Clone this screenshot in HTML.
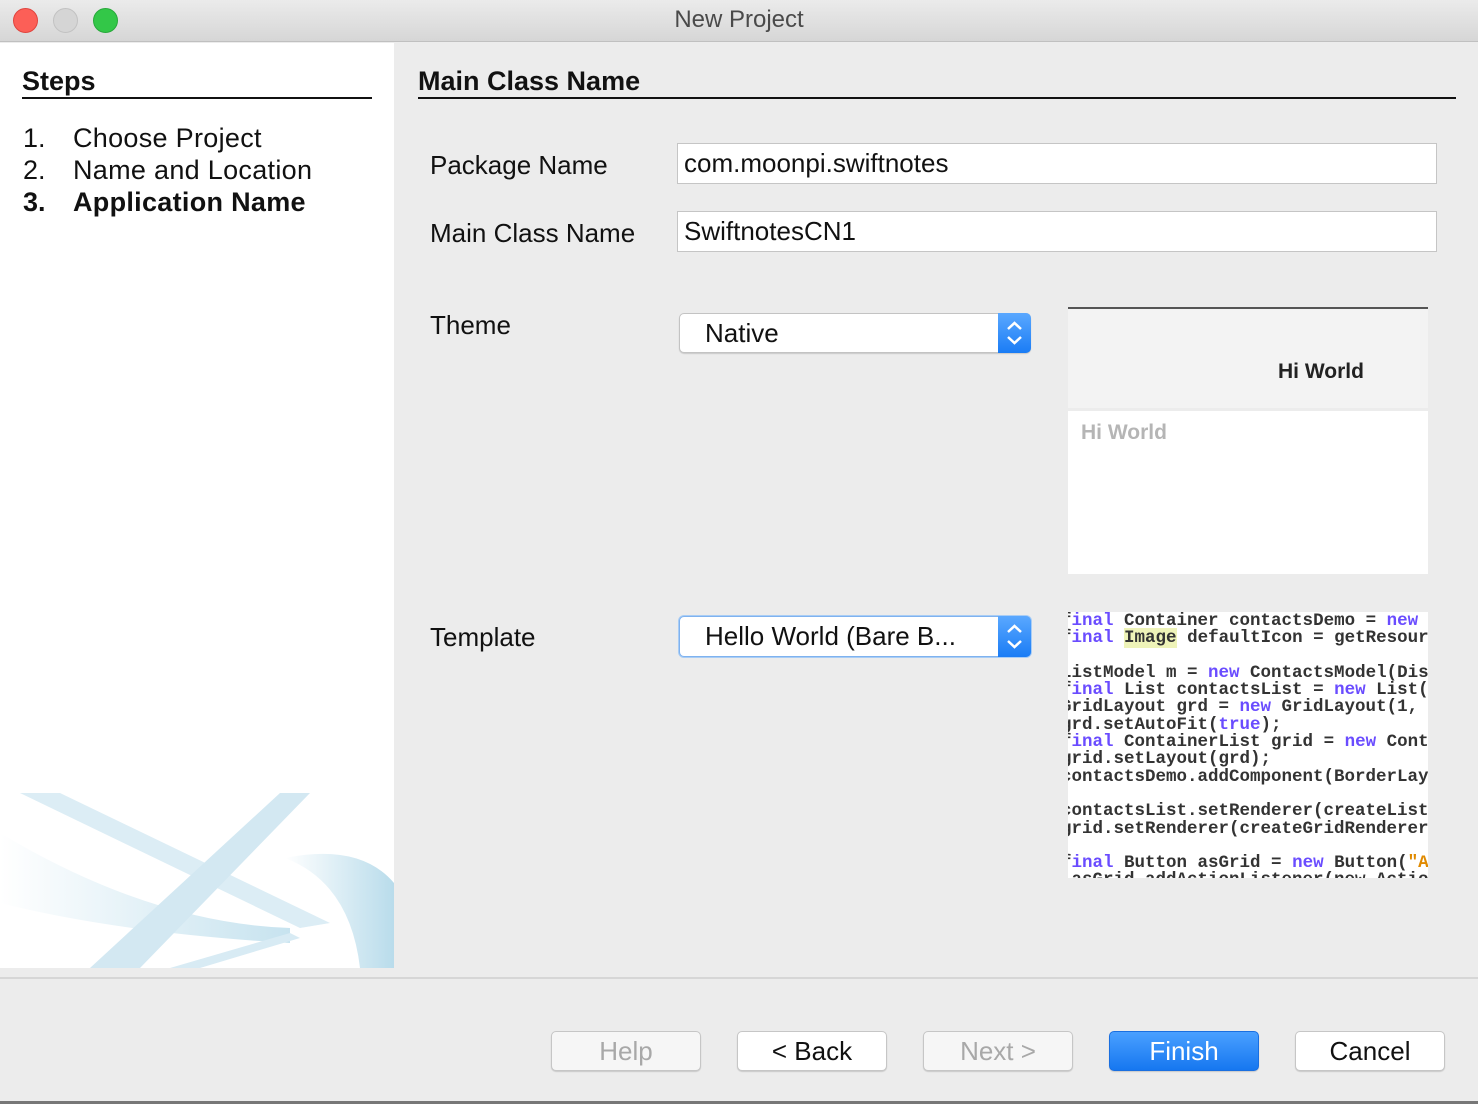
<!DOCTYPE html>
<html><head><meta charset="utf-8"><style>
*{margin:0;padding:0;box-sizing:border-box}
body{width:1478px;height:1104px;background:#ececec;font-family:"Liberation Sans",sans-serif;position:relative;overflow:hidden;color:#111}
.a{position:absolute}
.tb{left:0;top:0;width:1478px;height:42px;background:linear-gradient(#ebebeb,#d6d6d6);border-bottom:1px solid #c0c0c0}
.dot{width:25px;height:25px;border-radius:50%;top:8px}
.lbl{font-size:26px}
.field{background:#fff;border:1px solid #c5c5c5;font-size:26px;padding-left:6px;line-height:38px}
.combo{background:#fff;border:1px solid #c3c3c3;border-radius:5px;font-size:26px;padding-left:25px;box-shadow:0 1px 1px rgba(0,0,0,.15)}
.arr{right:-1px;top:-1px;width:33px;background:linear-gradient(#5aa8ff,#1a7cf5);border-radius:0 5px 5px 0}
.btn{top:1031px;width:150px;height:40px;background:#fff;border:1px solid #c6c6c6;border-radius:5px;font-size:26px;text-align:center;line-height:38px;box-shadow:0 1px 1px rgba(0,0,0,.15)}
.code{font-family:"Liberation Mono",monospace;font-size:17.5px;font-weight:bold;color:#333;line-height:17.3px;white-space:pre;letter-spacing:0}
.k{color:#6a4cff}
</style></head><body>
<div class="a tb"></div>
<div class="a dot" style="left:13px;background:#fc5f57;border:1px solid #e0443e"></div>
<div class="a dot" style="left:53px;background:#d5d5d5;border:1px solid #c2c2c2"></div>
<div class="a dot" style="left:93px;background:#33c748;border:1px solid #27a93a"></div>
<div class="a" style="left:0;width:1478px;top:6px;text-align:center;font-size:24px;color:#4a4a4a">New Project</div>

<div class="a" style="left:0;top:43px;width:394px;height:925px;background:#fff;overflow:hidden">
<svg width="394" height="925" style="position:absolute;left:0;top:0">
<defs><linearGradient id="g" x1="0" x2="1"><stop offset="0" stop-color="#fff"/><stop offset="1" stop-color="#b9dceb"/></linearGradient></defs>
<path d="M20 750 L60 750 L330 880 L300 885 Z" fill="#dcedf5"/>
<path d="M0 790 Q150 880 290 885 L290 900 Q120 890 0 860Z" fill="url(#g)" opacity=".8"/>
<path d="M310 750 L280 750 L90 925 L140 925Z" fill="#d3e8f2"/>
<path d="M285 815 Q360 800 394 840 L394 925 L360 925 Q350 840 285 815Z" fill="url(#g)"/>
<path d="M170 925 L290 890 L300 895 L200 925Z" fill="#d8ebf4"/>
</svg>
</div>
<div class="a" style="left:22px;top:66px;font-size:27px;font-weight:bold">Steps</div>
<div class="a" style="left:22px;top:97px;width:350px;height:2px;background:#111"></div>
<div class="a" style="left:23px;top:122px;font-size:27px;line-height:32px">1.<br>2.<br><b>3.</b></div>
<div class="a" style="left:73px;top:122px;font-size:27px;line-height:32px;letter-spacing:0.3px">Choose Project<br>Name and Location<br><b>Application Name</b></div>

<div class="a" style="left:418px;top:66px;font-size:27px;font-weight:bold">Main Class Name</div>
<div class="a" style="left:418px;top:97px;width:1038px;height:2px;background:#111"></div>

<div class="a lbl" style="left:430px;top:150px">Package Name</div>
<div class="a field" style="left:677px;top:143px;width:760px;height:41px">com.moonpi.swiftnotes</div>
<div class="a lbl" style="left:430px;top:218px">Main Class Name</div>
<div class="a field" style="left:677px;top:211px;width:760px;height:41px">SwiftnotesCN1</div>

<div class="a lbl" style="left:430px;top:310px">Theme</div>
<div class="a combo" style="left:679px;top:313px;width:352px;height:40px;line-height:38px">Native<div class="a arr" style="height:40px"><svg width="33" height="40"><path d="M10 16 L16.5 10 L23 16 M10 24 L16.5 30 L23 24" stroke="#fff" stroke-width="2.5" fill="none"/></svg></div></div>

<div class="a lbl" style="left:430px;top:622px">Template</div>
<div class="a combo" style="left:679px;top:616px;width:352px;height:41px;line-height:39px;border-color:#7fb2ef;box-shadow:0 0 0 1px #a9cdf5">Hello World (Bare B...<div class="a arr" style="height:41px"><svg width="33" height="41"><path d="M10 16 L16.5 10 L23 16 M10 25 L16.5 31 L23 25" stroke="#fff" stroke-width="2.5" fill="none"/></svg></div></div>

<div class="a" style="left:1068px;top:307px;width:360px;height:101px;background:#f3f3f3;border-top:2px solid #555"></div>
<div class="a" style="left:1278px;top:360px;font-size:21px;font-weight:bold;color:#222">Hi World</div>
<div class="a" style="left:1068px;top:411px;width:360px;height:163px;background:#fff"></div>
<div class="a" style="left:1081px;top:421px;font-size:21px;font-weight:bold;color:#b5b5b5">Hi World</div>

<div class="a" style="left:1068px;top:612px;width:360px;height:266px;background:#fff;overflow:hidden">
<div class="a code" style="left:-7px;top:1px">f<span class="k">inal</span> Container contactsDemo = <span class="k">new</span> Container
f<span class="k">inal</span> <span style="background:#eef3b8">Image</span> defaultIcon = getResourceAs

ListModel m = <span class="k">new</span> ContactsModel(Display
f<span class="k">inal</span> List contactsList = <span class="k">new</span> List(m);
GridLayout grd = <span class="k">new</span> GridLayout(1, 3);
grd.setAutoFit(<span class="k">true</span>);
f<span class="k">inal</span> ContainerList grid = <span class="k">new</span> Container
grid.setLayout(grd);
contactsDemo.addComponent(BorderLayout

contactsList.setRenderer(createListRen
grid.setRenderer(createGridRenderer());

f<span class="k">inal</span> Button asGrid = <span class="k">new</span> Button(<span style="color:#e08a00">"As Gr</span>
 asGrid.addActionListener(new Action</div>
</div>

<div class="a" style="left:0;top:977px;width:1478px;height:2px;background:#d6d6d6"></div>

<div class="a btn" style="left:551px;color:#a8a8a8;background:#f6f6f6">Help</div>
<div class="a btn" style="left:737px">&lt; Back</div>
<div class="a btn" style="left:923px;color:#a8a8a8;background:#f6f6f6">Next &gt;</div>
<div class="a btn" style="left:1109px;background:linear-gradient(#4aa0ff,#1677f0);border-color:#1a6fe0;color:#fff">Finish</div>
<div class="a btn" style="left:1295px">Cancel</div>
<div class="a" style="left:0;top:1101px;width:1478px;height:3px;background:#777"></div>
</body></html>
